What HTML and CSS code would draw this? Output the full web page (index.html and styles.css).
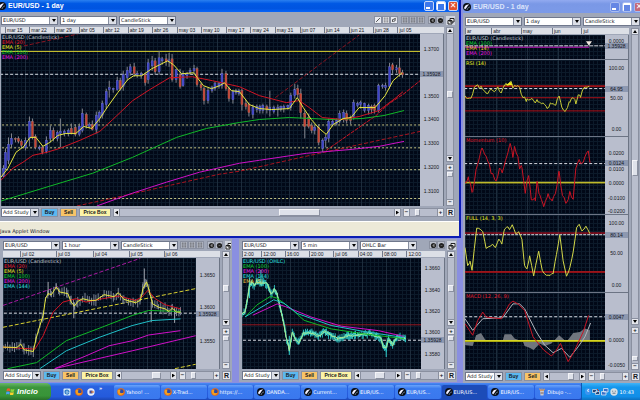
FILE: index.html
```
<!DOCTYPE html>
<html lang="en">
<head>
<meta charset="utf-8">
<title>EUR/USD - 1 day</title>
<link rel="stylesheet" href="styles.css">
</head>
<body>
<svg class="defs" aria-hidden="true">
  <symbol id="i-pen" viewBox="0 0 8 8"><path d="M1.5 6.5 6.5 1.5" stroke="#222" stroke-width="1"/></symbol>
  <symbol id="i-lines" viewBox="0 0 8 8"><path d="M1 1.5H7M1 4H7M1 6.5H7" stroke="#333" stroke-width="1" stroke-dasharray="1.6 .6"/></symbol>
  <symbol id="i-clip" viewBox="0 0 8 8"><path d="M2 6.5V3.5L5 2.5 6.5 1M3 6 5.5 5V2" stroke="#222" fill="none"/></symbol>
  <symbol id="i-left" viewBox="0 0 8 8"><circle cx="4" cy="4" r="3" fill="#222"/><path d="M4.5 2.2V5.8M3 4H4" stroke="#bbb" stroke-width=".9"/></symbol>
  <symbol id="i-dot" viewBox="0 0 8 8"><circle cx="4" cy="4" r="3" fill="#222"/><path d="M3 4H5" stroke="#777" stroke-width=".8"/></symbol>
  <symbol id="i-pop" viewBox="0 0 8 8"><path d="M3 1.5H7V5H3ZM1 3.5H5V7H1Z" fill="#eee" stroke="#111" stroke-width=".9"/></symbol>
  <symbol id="i-ball" viewBox="0 0 8 8"><circle cx="4" cy="4" r="4" fill="#080c14"/><path d="M1 5C2 2 4 1 6.5 1.5 4 3 4.5 4 2 6.5Z" fill="#eef"/><path d="M4 7C4.500 5 6 4 7 4" stroke="#9ab" fill="none" stroke-width=".7"/></symbol>
  <symbol id="i-fox" viewBox="0 0 8 8"><circle cx="4" cy="4" r="3.800" fill="#e86a10"/><circle cx="4.400" cy="3.400" r="2.200" fill="#2a4aa8"/><path d="M.5 3C1.500 1 2.500 2 3.500 2.500L2.800 4C3.500 5.500 5.500 5.500 6.500 4.500 6 7 3 7.600 1.500 6Z" fill="#f4a020"/></symbol>
  <symbol id="i-ie" viewBox="0 0 8 8"><rect x=".5" y=".5" width="7" height="7" rx="1" fill="#d8ecfa"/><path d="M2 4H6C6 1.500 2 1.500 2 4S5 6.500 6 5.200" fill="none" stroke="#2a78c8" stroke-width="1.100"/></symbol>
  <symbol id="i-media" viewBox="0 0 8 8"><circle cx="4" cy="4" r="3.700" fill="#e8ecf8"/><path d="M2.500 2.500H5.500V5.500H2.500Z" fill="#3a4aa0"/><path d="M4 4H7" stroke="#e86a10"/></symbol>
  <symbol id="i-paint" viewBox="0 0 8 8"><path d="M2 3H6L5.500 7.500H2.500Z" fill="#c8c8d0"/><path d="M3 3 1.500.5M4 3V.5M5 3 6.500.8" stroke="#e8a050" stroke-width="1.100"/><path d="M2.500 5H5.600" stroke="#806050"/></symbol>
  <symbol id="i-flag" viewBox="0 0 10 10"><path d="M1 2Q3 .8 4.800 2L4.300 4.800Q2.500 3.800.5 4.800Z" fill="#f05a28"/><path d="M5.400 2.200Q7.200 3.200 9.400 2.200L8.800 5Q7 6 4.900 5Z" fill="#8cd43c"/><path d="M.4 5.400Q2.400 4.400 4.200 5.500L3.700 8.300Q1.800 7.300-.1 8.300Z" fill="#4aa0f4"/><path d="M4.800 5.700Q6.700 6.700 8.700 5.700L8.100 8.500Q6.200 9.500 4.300 8.500Z" fill="#fcd22c"/></symbol>
  <symbol id="i-net" viewBox="0 0 8 8"><path d="M.5 1.500H4.500V4.500H.5ZM3.500 3.500H7.500V6.500H3.500Z" fill="#284878" stroke="#c8d8e8" stroke-width=".8"/><path d="M5 1 7 3" stroke="#d03030"/></symbol>
  <symbol id="i-pcs" viewBox="0 0 8 8"><path d="M2.500.5H7V4H2.500ZM.5 3.500H5V7H.5Z" fill="#3a70c8" stroke="#dde8f4" stroke-width=".8"/></symbol>
  <symbol id="i-face" viewBox="0 0 8 8"><circle cx="4" cy="4" r="3.700" fill="#d8e0e4"/><path d="M2.200 3.200H3.200M4.800 3.200H5.800M2.500 5.200H5.500" stroke="#405870" stroke-width=".8"/></symbol>
</svg>

<main class="desktop">
  <div class="left">
    <section class="window main-window" aria-label="EUR/USD 1 day">
      <header class="titlebar"><svg class="ico"><use href="#i-ball"/></svg><h1>EUR/USD - 1 day</h1>
        <button class="cap min" aria-label="Minimize"></button><button class="cap max" aria-label="Maximize"></button><button class="cap close" aria-label="Close">✕</button></header>
      <div class="client">
        <div class="toolbar">
          <span class="pick"><select aria-label="Pair"><option>EUR/USD</option></select></span>
          <span class="pick"><select aria-label="Interval"><option>1 day</option></select></span>
          <span class="pick"><select aria-label="Chart type"><option>CandleStick</option></select></span>
          <span class="tools">
            <span class="group lit"><button aria-label="Draw"><svg><use href="#i-pen"/></svg></button><button aria-label="Levels"><svg><use href="#i-lines"/></svg></button><button aria-label="Attach"><svg><use href="#i-clip"/></svg></button></span>
            <span class="group"><button aria-label="Grid"><svg><use href="#i-lines"/></svg></button><button aria-label="Rows"><svg><use href="#i-lines"/></svg></button><button aria-label="Dashes"><svg><use href="#i-lines"/></svg></button></span>
            <span class="group"><button aria-label="Back"><svg><use href="#i-left"/></svg></button><button aria-label="Forward"><svg><use href="#i-dot"/></svg></button></span>
          </span>
          <button class="pop" aria-label="Detach"><svg><use href="#i-pop"/></svg></button>
        </div>
        <div class="work">
          <div class="charts">
            <div class="dates" data-chart="day"></div>
            <div class="panel"><div class="plot week-grid" id="day"><ul class="legend"><li>EUR/USD (Candlestick)</li><li class="red">EMA (20)</li><li class="yellow">EMA (5)</li><li class="green">EMA (100)</li><li class="magenta">EMA (200)</li></ul></div><div class="axis"></div></div>
          </div>
          <div class="vbar"><button class="up" aria-label="Scroll up"></button><span class="track"><i class="t-35"></i></span><button class="down" aria-label="Scroll down"></button><button class="sep" aria-label="Zoom in">+</button><span class="track zoom"><i class="t-5"></i></span><button aria-label="Zoom out">−</button></div>
        </div>
        <div class="bottombar">
          <span class="pick study"><select aria-label="Study"><option>Add Study</option></select></span>
          <button class="act buy">Buy</button><button class="act sell">Sell</button><button class="act box">Price Box</button>
          <span class="hbar"><button class="prev" aria-label="Scroll left"></button><span class="track"><i class="h-main"></i></span><button class="next" aria-label="Scroll right"></button></span>
          <span class="hbar zoomer"><button aria-label="Narrower">−</button><span class="track"><i class="h-zoom"></i></span><button aria-label="Wider">+</button></span>
          <button class="reset">R</button>
        </div>
      </div>
      <footer class="status">Java Applet Window</footer>
    </section>

    <div class="lower">
      <section class="window sub" aria-label="EUR/USD 1 hour">
        <div class="client">
          <div class="toolbar">
            <span class="pick"><select aria-label="Pair"><option>EUR/USD</option></select></span>
            <span class="pick"><select aria-label="Interval"><option>1 hour</option></select></span>
            <span class="pick"><select aria-label="Chart type"><option>CandleStick</option></select></span>
            <span class="tools">
              <span class="group"><button aria-label="Grid"><svg><use href="#i-lines"/></svg></button><button aria-label="Rows"><svg><use href="#i-lines"/></svg></button><button aria-label="Dashes"><svg><use href="#i-lines"/></svg></button></span>
              <span class="group"><button aria-label="Back"><svg><use href="#i-left"/></svg></button><button aria-label="Forward"><svg><use href="#i-dot"/></svg></button></span>
            </span>
            <button class="pop" aria-label="Detach"><svg><use href="#i-pop"/></svg></button>
          </div>
          <div class="work">
            <div class="charts">
              <div class="dates" data-chart="hour"></div>
              <div class="panel"><div class="plot hour-grid" id="hour"><ul class="legend"><li>EUR/USD (Candlestick)</li><li class="red">EMA (20)</li><li class="yellow">EMA (5)</li><li class="green">EMA (100)</li><li class="magenta">EMA (200)</li><li class="cyan">EMA (144)</li></ul></div><div class="axis"></div></div>
            </div>
            <div class="vbar"><button class="up" aria-label="Scroll up"></button><span class="track"><i class="t-50"></i></span><button class="down" aria-label="Scroll down"></button><button class="sep" aria-label="Zoom in">+</button><span class="track zoom"><i class="t-5"></i></span><button aria-label="Zoom out">−</button></div>
          </div>
          <div class="bottombar">
            <span class="pick study"><select aria-label="Study"><option>Add Study</option></select></span>
            <button class="act buy">Buy</button><button class="act sell">Sell</button><button class="act box">Price Box</button>
            <span class="hbar"><button class="prev" aria-label="Scroll left"></button><span class="track"><i class="h-sub"></i></span><button class="next" aria-label="Scroll right"></button></span>
            <span class="hbar zoomer"><button aria-label="Narrower">−</button><span class="track"><i class="h-zoom"></i></span><button aria-label="Wider">+</button></span>
            <button class="reset">R</button>
          </div>
        </div>
      </section>
      <section class="window sub" aria-label="EUR/USD 5 min">
        <div class="client">
          <div class="toolbar">
            <span class="pick"><select aria-label="Pair"><option>EUR/USD</option></select></span>
            <span class="pick"><select aria-label="Interval"><option>5 min</option></select></span>
            <span class="pick"><select aria-label="Chart type"><option>OHLC Bar</option></select></span>
            <span class="tools"><span class="group"><button aria-label="Back"><svg><use href="#i-left"/></svg></button><button aria-label="Forward"><svg><use href="#i-dot"/></svg></button></span></span>
            <button class="pop" aria-label="Detach"><svg><use href="#i-pop"/></svg></button>
          </div>
          <div class="work">
            <div class="charts">
              <div class="dates" data-chart="five"></div>
              <div class="panel"><div class="plot five-grid" id="five"><ul class="legend"><li class="cyan">EUR/USD (OHLC)</li><li class="green">EMA (100)</li><li class="magenta">EMA (200)</li><li class="cyan">EMA (144)</li><li class="gold">EMA (5)</li></ul></div><div class="axis"></div></div>
            </div>
            <div class="vbar"><button class="up" aria-label="Scroll up"></button><span class="track"><i class="t-50"></i></span><button class="down" aria-label="Scroll down"></button><button class="sep" aria-label="Zoom in">+</button><span class="track zoom"><i class="t-5"></i></span><button aria-label="Zoom out">−</button></div>
          </div>
          <div class="bottombar">
            <span class="pick study"><select aria-label="Study"><option>Add Study</option></select></span>
            <button class="act buy">Buy</button><button class="act sell">Sell</button><button class="act box">Price Box</button>
            <span class="hbar"><button class="prev" aria-label="Scroll left"></button><span class="track"><i class="h-five"></i></span><button class="next" aria-label="Scroll right"></button></span>
            <span class="hbar zoomer"><button aria-label="Narrower">−</button><span class="track"><i class="h-zoom"></i></span><button aria-label="Wider">+</button></span>
            <button class="reset">R</button>
          </div>
        </div>
      </section>
    </div>
  </div>

  <section class="window side" aria-label="EUR/USD 1 day studies">
    <header class="titlebar idle"><svg class="ico"><use href="#i-ball"/></svg><h1>EUR/USD - 1 day</h1>
      <button class="cap min" aria-label="Minimize"></button><button class="cap max" aria-label="Maximize"></button><button class="cap close" aria-label="Close">✕</button></header>
    <div class="client">
      <div class="toolbar">
        <span class="pick"><select aria-label="Pair"><option>EUR/USD</option></select></span>
        <span class="pick"><select aria-label="Interval"><option>1 day</option></select></span>
        <span class="pick"><select aria-label="Chart type"><option>CandleStick</option></select></span>
      </div>
      <div class="work">
        <div class="charts">
          <div class="dates" data-chart="price"></div>
          <div class="panel short"><div class="plot" id="price"><ul class="legend"><li>EUR/USD (Candlestick)</li><li class="green">EMA (100)</li><li class="gold">EMA (14)</li><li class="magenta">EMA (200)</li></ul></div><div class="axis"></div></div>
          <div class="panel"><div class="plot" id="rsi"><ul class="legend"><li class="yellow">RSI (14)</li></ul></div><div class="axis"></div></div>
          <div class="panel"><div class="plot" id="momentum"><ul class="legend"><li class="red">Momentum (10)</li></ul></div><div class="axis"></div></div>
          <div class="panel"><div class="plot" id="full"><ul class="legend"><li class="yellow">FULL (14, 3, 3)</li></ul></div><div class="axis"></div></div>
          <div class="panel"><div class="plot" id="macd"><ul class="legend"><li class="red">MACD (12, 26, 9)</li></ul></div><div class="axis"></div></div>
        </div>
        <div class="vbar"><button class="up" aria-label="Scroll up"></button><span class="track"><i class="t-50"></i></span><button class="down" aria-label="Scroll down"></button><button class="sep" aria-label="Zoom in">+</button><span class="track zoom"><i class="t-90"></i></span><button aria-label="Zoom out">−</button></div>
      </div>
      <div class="bottombar">
        <span class="pick study"><select aria-label="Study"><option>Add Study</option></select></span>
        <button class="act buy">Buy</button><button class="act sell">Sell</button>
        <span class="hbar"><button class="prev" aria-label="Scroll left"></button><span class="track"><i class="h-sub"></i></span><button class="next" aria-label="Scroll right"></button></span>
        <span class="hbar zoomer"><button aria-label="Narrower">−</button><span class="track"><i class="h-zoom"></i></span><button aria-label="Wider">+</button></span>
        <button class="reset">R</button>
      </div>
    </div>
  </section>
</main>

<nav class="taskbar" aria-label="Taskbar">
  <button class="start"><svg><use href="#i-flag"/></svg>Inicio</button>
  <span class="quick"><svg><use href="#i-ie"/></svg><svg><use href="#i-fox"/></svg><svg><use href="#i-media"/></svg><b>»</b></span>
  <div class="tasks">
    <button><svg><use href="#i-fox"/></svg>Yahoo! ...</button>
    <button><svg><use href="#i-fox"/></svg>X-Trad...</button>
    <button><svg><use href="#i-fox"/></svg>https://...</button>
    <button><svg><use href="#i-ball"/></svg>OANDA...</button>
    <button><svg><use href="#i-ball"/></svg>Current...</button>
    <button><svg><use href="#i-ball"/></svg>EUR/US...</button>
    <button><svg><use href="#i-ball"/></svg>EUR/US...</button>
    <button class="on"><svg><use href="#i-ball"/></svg>EUR/US...</button>
    <button><svg><use href="#i-ball"/></svg>EUR/US...</button>
    <button><svg><use href="#i-paint"/></svg>Dibujo -...</button>
  </div>
  <span class="tray"><b>‹</b><svg><use href="#i-net"/></svg><svg><use href="#i-pcs"/></svg><svg><use href="#i-face"/></svg><time>10:43</time></span>
</nav>
<script src="charts.js"></script>
</body>
</html>
```
FILE: styles.css
```
* { box-sizing: border-box; }
html, body { height: 100%; margin: 0; }
body {
  display: grid;
  grid-template-rows: minmax(0, 1fr) 17px;
  background: #8890dc;
  font: 5px/6px "DejaVu Sans", "Liberation Sans", sans-serif;
  color: #14161c;
  overflow: hidden;
}
button, select { font: inherit; color: inherit; margin: 0; padding: 0; border: 0; border-radius: 0; }
button { display: grid; place-items: center; overflow: hidden; }
.defs { position: absolute; width: 0; height: 0; }
svg { display: block; }
ul { list-style: none; margin: 0; padding: 0; }

.desktop { display: grid; grid-template-columns: 461fr 179fr; min-height: 0; }
.left { display: grid; grid-template-rows: 238fr 145fr; min-width: 0; min-height: 0; }
.lower { display: grid; grid-template-columns: 234fr 227fr; min-height: 0; }
.window { display: flex; flex-direction: column; min-width: 0; min-height: 0; }
.main-window { border: solid #0a1cb4; border-width: 0 2px 2px 0; }
.side { border-left: 2px solid #8a90e0; overflow: hidden; }
.sub { border: 1px solid #8a8fe0; border-width: 1px 2px 1px 0; }
.sub + .sub { border-left-width: 5px; border-right-width: 4px; }

.titlebar {
  display: flex;
  align-items: center;
  gap: 2px;
  height: 12px;
  padding-right: 1px;
  background: linear-gradient(#2a80f0, #0058e4 30%, #0054e0 70%, #0a66f8);
  color: #fff;
}
.titlebar h1 { flex: 1; margin: 0; font: bold 7px/10px "Liberation Sans", sans-serif; white-space: nowrap; }
.idle { background: linear-gradient(#92aaf0, #7a98e6 30%, #7c9ae8); color: #dce4fa; }
.side .titlebar { height: 13px; padding-right: 0; margin-right: -4px; }
.ico { width: 8px; height: 8px; margin-left: -2px; }
.side .ico { margin-left: 0; }
.cap { width: 10px; height: 10px; border: 1px solid #c8d8f8; border-radius: 2px; background: #3c78ec; color: #fff; font: bold 8px/8px "DejaVu Sans", sans-serif; }
.cap.min::before { content: ""; width: 4px; height: 2px; background: #fff; align-self: end; margin: 0 2px 1px 0; }
.cap.max::before { content: ""; width: 6px; height: 6px; border: 1px solid #fff; border-top-width: 2px; }
.cap.close { background: #e0502c; }
.idle .cap { background: #6486e4; border-color: #a8bcf0; }
.idle .cap.close { background: #c46878; }

.client { flex: 1; display: flex; flex-direction: column; min-height: 0; background: #a0a7b8; padding: 4px 3px 4px 1px; }
.main-window .client { padding-right: 4px; }
.sub .client { padding: 2px 1px 2px 3px; }
.side .client { padding: 4px 0 2px 2px; }
.toolbar { display: flex; height: 9px; margin-bottom: 2px; gap: 2px; }
.sub .toolbar { margin-bottom: 1px; }
.pick { position: relative; flex: 0 0 57px; height: 9px; background: #fff; border: 1px solid #70788c; }
.pick select { display: block; width: 100%; height: 7px; padding-left: 1px; line-height: 7px; background: #fff; appearance: none; }
.pick::before { content: ""; position: absolute; right: 0; top: 0; width: 7px; height: 7px; background: #dde0e8; border-left: 1px solid #888fa0; pointer-events: none; }
.pick::after { content: ""; position: absolute; right: 1px; top: 2px; width: 4px; height: 3px; background: #000; clip-path: polygon(0 0, 100% 0, 50% 100%); pointer-events: none; }
.tools { flex: 1; display: flex; justify-content: flex-end; gap: 3px; }
.group { display: flex; }
.group button { width: 8px; height: 8px; border: 1px solid #8a90a0; background: #b8bdca; }
.group.lit button { background: #e8eaf0; }
.group svg, .pop svg { width: 6px; height: 6px; }
.group:last-child svg { width: 7px; height: 7px; }
.pop { width: 9px; height: 9px; background: #d0d4de; }
.pop svg { width: 8px; height: 8px; }

.work { flex: 1; display: flex; gap: 2px; min-height: 0; }
.charts { flex: 1; display: flex; flex-direction: column; min-width: 0; }
.dates { position: relative; height: 6px; background: #dcdfe6; overflow: hidden; margin-bottom: 1px; font: 5px/6px "Liberation Sans", sans-serif; }
.dates span { position: absolute; top: 0; padding-left: 1px; border-left: 1px solid #70788c; white-space: nowrap; }
.panel { flex: 78 1 0; display: flex; min-height: 0; }
.panel + .panel { border-top: 1px solid #6c7484; }
.panel.short { flex-grow: 24; }
.plot {
  position: relative;
  flex: 1;
  min-width: 0;
  overflow: hidden;
  --major: 31px;
  background:
    repeating-linear-gradient(90deg, #1d2c3c 0 1px, transparent 1px var(--major)),
    repeating-linear-gradient(#0c1a2a 0 1px, transparent 1px 4px),
    repeating-linear-gradient(90deg, #0c1a2a 0 1px, transparent 1px 4px),
    #010817;
}
.week-grid { --major: 24px; }
.hour-grid { --major: 36px; }
.five-grid { --major: 24px; }
.plot svg { position: absolute; inset: 0; width: 100%; height: 100%; }
.plot path { fill: none; vector-effect: non-scaling-stroke; stroke-width: 1px; }
.plot path.solid { stroke: none; }
.legend { position: relative; padding: 1px 0 0 1px; color: #c0c8d0; line-height: 5px; white-space: nowrap; }
.red { color: #e01828; }
.yellow { color: #f0f020; }
.green { color: #10d830; }
.magenta { color: #e818e0; }
.cyan { color: #30e0e0; }
.gold { color: #f0c840; }
.axis { position: relative; flex: 0 0 24px; background: #b9becd; border-right: 1px solid #6c7484; font: 5px/6px "Liberation Sans", sans-serif; text-align: center; overflow: hidden; }
.axis span { position: absolute; left: 0; right: 0; margin-top: -3px; }
.axis .now { background: #8d98b0; z-index: 1; }

.vbar { flex: 0 0 9px; display: flex; flex-direction: column; }
.vbar button, .hbar button, .reset { background: #e4e6ec; border: 1px solid #8a90a0; width: 8px; height: 7px; font: bold 6px/5px "Liberation Sans", sans-serif; }
.vbar .sep { margin-top: 2px; }
.track { position: relative; flex: 1; width: 8px; background: #b9becd; border: 1px solid #8a90a0; border-width: 0 1px; }
.vbar .zoom { flex: 0 0 28px; }
.side .vbar .track { flex: 1; }
.side .vbar .track.zoom { flex: 0 0 29px; }
.sub .vbar .zoom { flex: 0 0 27px; }
.track i { position: absolute; background: #dfe2ea; border: 1px solid #f4f4f8; border-right-color: #8a90a0; border-bottom-color: #8a90a0; }
.vbar .track i { left: 0; right: 0; height: 7px; }
.vbar .zoom i { height: 5px; }
.vbar .track .t-35 { top: 47%; }
.vbar .track .t-50 { top: 45%; }
.side .track .t-50 { top: 44%; height: 16px; }
.vbar .track .t-5 { top: 5%; }
.vbar .track .t-90 { top: 76%; }
.up::before, .down::before, .prev::before, .next::before { content: ""; width: 4px; height: 3px; background: #000; }
.up::before { clip-path: polygon(50% 0, 100% 100%, 0 100%); }
.down::before { clip-path: polygon(0 0, 100% 0, 50% 100%); }
.prev::before, .next::before { width: 3px; height: 4px; }
.prev::before { clip-path: polygon(100% 0, 100% 100%, 0 50%); }
.next::before { clip-path: polygon(0 0, 100% 50%, 0 100%); }

.bottombar { display: flex; gap: 2px; height: 9px; margin-top: 2px; }
.pick.study { flex-basis: 38px; }
.act { height: 9px; border: 1px solid #8a90a0; font-weight: bold; font-family: "Liberation Sans", sans-serif; line-height: 7px; }
.buy { flex: 0 0 17px; background: #5cb8f0; }
.sell { flex: 0 0 17px; background: #f8c468; }
.box { flex: 0 0 32px; background: #fcf4a8; }
.hbar { flex: 1; display: flex; min-width: 0; }
.hbar button { height: 9px; width: 7px; flex: none; }
.hbar .track { width: auto; height: 9px; border-width: 1px 0; min-width: 0; }
.zoomer { flex: 0 0 41px; }
.track .h-main { left: 58%; width: 15%; top: 0; bottom: 0; }
.track .h-sub { left: 62%; width: 20%; top: 0; bottom: 0; }
.track .h-five { left: 40%; width: 30%; top: 0; bottom: 0; }
.track .h-zoom { left: 20%; width: 18%; top: 0; bottom: 0; }
.bottombar .reset { height: 9px; width: 9px; flex: none; font-size: 7px; }
.status { height: 15px; border-top: 1px solid #fff; padding-top: 6px; background: #ece9d8; line-height: 7px; overflow: hidden; }

.taskbar { display: flex; background: linear-gradient(#4a8cf4, #2a62e0 20%, #245adc 80%, #1c46b4); color: #fff; white-space: nowrap; }
.taskbar svg { flex: none; width: 8px; height: 8px; }
.start { display: flex; align-items: center; gap: 2px; width: 51px; padding-left: 6px; border-radius: 0 5px 5px 0; background: linear-gradient(#6ab86a, #3c963c 25%, #389438 75%, #287028); font: italic bold 8px/12px "Liberation Sans", sans-serif; }
.start svg { width: 9px; height: 9px; }
.quick { display: flex; align-items: center; gap: 4px; width: 63px; padding-left: 12px; }
.quick b { font-size: 5px; align-self: start; line-height: 10px; }
.tasks { flex: 1; display: grid; grid-template-columns: repeat(10, minmax(0, 1fr)); gap: 1px; align-items: center; }
.tasks button { display: flex; align-items: center; gap: 1px; height: 14px; padding-left: 3px; border-radius: 2px; background: linear-gradient(#6aa4fa, #3c7cf0 25%, #3a78ee); }
.tasks .on { background: #1c4cb8; }
.tray { display: flex; align-items: center; gap: 1px; width: 59px; padding: 0 6px 0 3px; background: linear-gradient(#40b4f8, #1496ec 25%, #128ee8 80%, #0c70c0); border-left: 1px solid #0c58b0; }
.tray b { width: 6px; height: 7px; border-radius: 3px; background: #3c94f0; font: bold 7px/6px "Liberation Sans", sans-serif; text-align: center; }
.tray time { margin-left: auto; }
```
FILE: charts.js
```
// Each chart: view box, price labels, date marks and the layers drawn in order.
const C = { red: '#d01424', yellow: '#e8e840', green: '#10b828', magenta: '#d010c8', cyan: '#20c0c8', white: '#d8dce4', cream: '#c8c888' };
const h = (y, c, dash) => ({ pts: [[-50, y], [700, y]], c, dash });

const seeded = seed => () => (seed = (seed * 16807) % 2147483647) / 2147483647;
const path = p => 'M' + p.map(q => q.join(' ')).join('L');

// Inserts jittered points between the key points of a series.
function rough(pts, step, amp, seed) {
  const r = seeded(seed), out = [];
  for (let i = 0; i < pts.length - 1; i++) {
    const [x0, y0] = pts[i], [x1, y1] = pts[i + 1];
    for (let x = x0; x < x1; x += step) out.push([+x.toFixed(1), +(y0 + (y1 - y0) * (x - x0) / (x1 - x0) + (r() - .5) * amp).toFixed(1)]);
  }
  return out.concat([pts[pts.length - 1]]);
}
function bars(pts, step, amp, seed) {
  const r = seeded(seed);
  return rough(pts, step, 4, seed + 1).map(([x, y]) => `M${x} ${y - amp * (.3 + r())}V${y + amp * (.3 + r())}`).join('');
}

// x, high, body top, body bottom, low, direction
const candles = `3 165 168 176 177 b|5 148 152 168 170 b|8 137 144 160 164 b|11 133 138 144 147 b|15 137 138 139 142 r|18 136 138 141 143 r|21 139 141 145 148 r|25 137 140 147 150 b|29 116 121 138 146 b|32 118 121 137 139 r|35 134 136 147 149 r|39 145 147 148 150 b|42 145 147 152 154 r|46 136 140 151 153 b|50 125 130 138 142 b|53 127 130 138 141 r|57 130 132 138 141 b|60 118 131 133 147 b|64 129 131 133 136 b|68 128 130 133 136 b|71 123 128 133 134 r|75 124 127 134 136 r|79 123 126 134 136 b|82 108 113 130 132 b|86 112 114 125 128 r|89 122 124 126 128 b|92 120 124 129 130 r|96 111 115 129 133 b|99 110 112 118 122 b|102 100 103 115 118 b|106 88 91 104 108 b|109 80 87 89 97 b|113 87 88 89 92 b|117 76 80 89 90 b|120 77 80 88 90 r|123 70 74 86 90 b|127 66 70 77 80 b|130 63 66 72 75 b|134 62 66 73 76 r|137 70 73 74 77 b|141 71 73 74 78 b|145 72 74 82 85 r|148 58 62 79 83 b|152 55 60 65 70 b|155 57 60 71 74 r|159 50 57 71 74 b|162 56 58 60 64 b|166 53 58 61 65 r|169 52 59 61 66 b|172 53 58 79 81 r|176 68 69 79 82 b|180 68 74 86 88 r|183 70 73 85 86 b|187 71 73 75 78 b|190 67 70 72 74 b|194 64 68 70 73 b|197 66 68 84 86 r|201 82 84 87 90 r|204 86 88 100 104 r|208 87 90 100 103 b|212 85 87 90 92 b|215 81 83 88 90 b|219 81 83 86 88 b|222 68 73 85 88 b|226 70 73 88 90 r|229 86 88 98 101 r|233 89 91 99 103 b|236 88 90 92 94 b|239 88 90 93 95 b|242 88 90 104 110 r|246 99 103 106 109 r|249 102 104 112 116 r|253 104 107 114 118 b|257 104 106 109 112 b|260 104 106 110 113 b|263 103 105 110 113 b|267 104 106 109 113 r|270 90 107 110 116 b|274 105 107 111 113 b|278 104 107 109 116 b|281 105 106 109 111 b|284 104 106 108 112 b|288 104 105 107 109 b|291 92 95 107 110 b|295 83 89 95 98 b|298 84 88 94 97 r|301 88 93 112 118 r|305 110 113 126 138 r|309 113 117 126 128 r|312 122 125 130 133 r|315 125 127 130 134 b|319 124 127 142 145 r|323 138 140 148 152 b|326 134 137 140 147 b|329 118 121 138 142 b|333 118 121 124 126 b|337 118 120 123 125 b|340 110 113 121 123 b|344 109 112 118 122 b|347 110 113 120 123 r|351 115 117 120 124 r|354 99 102 116 119 b|358 101 103 105 107 b|361 100 102 104 108 b|365 102 103 110 112 b|369 103 105 110 114 b|372 104 106 109 113 r|375 103 105 110 113 r|379 83 85 110 112 b|383 83 85 86 88 b|386 82 85 87 90 b|390 62 66 86 88 b|393 62 64 69 73 r|397 64 67 69 72 b|400 57 67 73 76 r|403 69 72 74 77 r`.split('|').map(c => c.split(' '));

const closes = [[1, 177], [8, 168], [16, 152], [24, 146], [30, 137], [36, 137], [43, 146], [50, 142], [58, 135], [66, 133], [76, 133], [84, 126], [92, 128], [100, 118], [108, 106], [118, 92], [128, 79], [134, 75], [142, 75], [152, 68], [160, 64], [168, 60], [174, 64], [182, 73], [194, 72], [204, 85], [212, 88], [220, 85], [225, 82], [232, 90], [240, 91], [250, 104], [260, 108], [272, 109], [290, 108], [298, 97], [304, 107], [312, 119], [320, 128], [327, 134], [334, 124], [344, 118], [352, 117], [360, 107], [376, 107], [386, 95], [394, 80], [403, 72]];
const hourClose = [[8, 334], [50, 335], [62, 325], [72, 342], [100, 347], [108, 310], [120, 270], [130, 240], [137, 190], [145, 175], [155, 178], [170, 155], [180, 170], [205, 175], [215, 200], [225, 212], [235, 198], [250, 190], [270, 195], [290, 195], [315, 178], [345, 184], [358, 172], [375, 192], [410, 202], [425, 195], [433, 160], [444, 140], [453, 170], [462, 205], [480, 215], [500, 220], [512, 228], [522, 218], [535, 230], [547, 230]];
const fiveClose = [[36, 240], [45, 230], [52, 195], [58, 150], [65, 145], [72, 155], [80, 142], [90, 148], [100, 145], [112, 152], [122, 178], [132, 165], [140, 178], [150, 220], [160, 265], [168, 310], [176, 340], [185, 290], [195, 310], [205, 318], [218, 292], [240, 290], [262, 300], [280, 287], [300, 300], [320, 310], [345, 300], [380, 298], [415, 292], [435, 300], [448, 310], [455, 332], [463, 335], [470, 308], [482, 328], [495, 303], [520, 308]];

const charts = {
  day: {
    box: [1, 33, 420, 173],
    dates: ['mar 15', 'mar 22', 'mar 29', 'abr 05', 'abr 12', 'abr 19', 'abr 26', 'may 03', 'may 10', 'may 17', 'may 24', 'may 31', 'jun 07', 'jun 14', 'jun 21', 'jun 28', 'jul 05'].map((t, i) => [(4 + i * 24.6) / 4.44, t]),
    labels: [[48, '1.3700'], [73, '1.35928', 1], [95.5, '1.3500'], [119, '1.3400'], [143, '1.3300'], [167, '1.3200'], [191, '1.3100']],
    layers: [
      h(50.5, '#d8d030'), h(73.5, C.white, '3 2'), h(124.5, C.cream, '2 2'), h(147.5, C.cream, '2 2'), h(169.5, C.cream, '2 2'), h(198.5, C.cream, '2 2'),
      { pts: [[24, 45], [78, 33]], c: '#8c1420', dash: '4 2' }, { pts: [[276, 97], [360, 34]], c: '#8c1420', dash: '4 2' },
      { pts: [[77, 206], [127, 195], [220, 174], [240, 171], [320, 153], [421, 131]], c: '#a81420', dash: '4 2' },
      { pts: [[327, 150], [377, 115], [390, 103], [405, 93], [421, 80]], c: C.red, dash: '4 1' },
      { candles },
      { pts: [[1, 201], [50, 186], [93, 173], [133, 157], [177, 137], [207, 128], [240, 122], [260, 119], [290, 117], [333, 119], [363, 118], [385, 115], [405, 110]], c: C.green },
      { pts: [[97, 206], [133, 193], [167, 182], [200, 172], [240, 163], [260, 160], [307, 153], [353, 149], [380, 146], [405, 141]], c: C.magenta },
      { pts: [[1, 180], [13, 168], [23, 162], [33, 155], [47, 152], [60, 148], [80, 140], [100, 131], [113, 119], [133, 100], [150, 89], [170, 77], [193, 76], [213, 80], [240, 86], [260, 95], [287, 102], [300, 100], [310, 107], [323, 117], [343, 119], [360, 116], [380, 110], [397, 97], [404, 91]], c: C.red },
      { pts: closes, c: C.yellow }
    ]
  },
  hour: {
    box: [8, 69, 586, 330],
    dates: [[8, 'jul 02'], [24.5, 'jul 03'], [41.5, 'jul 04'], [58, 'jul 05'], [74, 'jul 06']],
    labels: [[120, '1.3650'], [216, '1.3600'], [234, '1.35928', 1], [315, '1.3550']],
    layers: [
      h(233, C.white, '3 2'),
      { pts: [[8, 210], [425, 70]], c: '#a818a0', dash: '4 2' }, { pts: [[8, 275], [593, 160]], c: '#d8d030', dash: '4 2' }, { pts: [[530, 398], [593, 385]], c: '#d8d030', dash: '4 2' },
      { d: bars(hourClose, 7, 14, 7), c: '#7c8494' },
      { d: 'M437 100V160M458 200V260M223 200V248M145 140V180M529 220V262', c: '#a0a4ac' },
      { pts: [[22, 398], [110, 380], [200, 315], [300, 278], [400, 240], [450, 225], [547, 228]], c: C.green },
      { pts: [[120, 398], [200, 345], [300, 305], [400, 270], [460, 255], [547, 250]], c: C.cyan },
      { pts: [[165, 398], [260, 360], [330, 330], [400, 315], [450, 298], [547, 285]], c: C.magenta },
      { pts: [[165, 398], [400, 345], [593, 300]], c: C.magenta },
      { pts: [[8, 334], [105, 340], [130, 300], [160, 230], [190, 200], [230, 190], [260, 200], [310, 190], [360, 182], [410, 195], [430, 185], [448, 165], [470, 190], [500, 208], [547, 220]], c: C.red },
      { pts: hourClose, c: C.yellow }
    ]
  },
  five: {
    box: [36, 73, 530, 324],
    dates: [[0, '2:00'], [9.5, '12:00'], [21, '16:00'], [33, '20:00'], [45, 'jul 06'], [57, '04:00'], [69, '08:00'], [81, '12:00']],
    labels: [[102, '1.3660'], [165, '1.3640'], [228, '1.3620'], [290, '1.3600'], [312, '1.35928', 1], [353, '1.3580']],
    layers: [
      h(268, '#981820'), h(313, C.white, '3 2'),
      { d: bars(fiveClose, 3, 10, 11), c: '#28b8b8' },
      { d: 'M92 108V150M58 130V190M176 300V356M463 320V362', c: '#30d0d0' },
      { pts: rough(fiveClose, 3, 14, 5), c: '#60e8c8' }, { pts: rough(fiveClose, 6, 8, 9), c: '#a8e890' },
      { pts: [[45, 245], [80, 210], [120, 185], [140, 190], [180, 220], [220, 255], [300, 280], [400, 295], [515, 308]], c: C.green },
      { pts: [[68, 240], [140, 207], [165, 215], [240, 245], [330, 272], [440, 285], [515, 302]], c: C.magenta },
      { pts: [[45, 245], [130, 195], [160, 205], [200, 235], [300, 270], [400, 288], [515, 305]], c: C.cyan }
    ]
  },
  price: {
    box: [27, 103, 418, 72],
    dates: [[0, 'ar'], [16, 'abr'], [34, 'may'], [53, 'jun'], [71, 'jul']],
    labels: [[120, '0.0000'], [138, '1.35928', 1]],
    layers: [{ pts: [[27, 140], [398, 140]], c: C.magenta }, h(136, C.white, '4 1'), { fill: 'M388 122H406L397 136Z', c: '#f4e8e0' }]
  },
  rsi: {
    box: [27, 175, 418, 234],
    labels: [[199, '100.00'], [264, '64.95', 1], [292, '50.00'], [385, '0.00']],
    layers: [
      h(254, '#d81818'), h(256, '#a01018'), h(290, '#b01018'), h(330, '#b01018'), h(262, C.white, '3 2'),
      { pts: rough([[27, 290], [35, 295], [45, 290], [55, 262], [65, 256], [78, 260], [90, 280], [105, 270], [115, 275], [125, 262], [135, 272], [145, 250], [165, 245], [170, 258], [180, 252], [190, 262], [200, 285], [212, 298], [222, 290], [232, 302], [245, 298], [260, 308], [272, 320], [285, 308], [298, 310], [308, 282], [316, 318], [328, 328], [340, 300], [350, 290], [358, 305], [365, 280], [372, 285], [382, 262], [398, 256]], 5, 12, 3), c: '#c8cc38' },
      { fill: 'M143 252 155 247 163 242 170 252Z', c: '#f0f020' }
    ]
  },
  momentum: {
    box: [27, 34, 418, 234],
    labels: [[80, '0.0200'], [131, '0.0100'], [113, '0.0124', 1], [172, '0.0000'], [218, '-0.0100'], [259, '-0.0200']],
    layers: [
      h(115, C.white, '3 2'), h(172, '#f4f040'), h(174, '#b8b020'),
      { pts: rough([[27, 180], [38, 160], [50, 205], [60, 130], [78, 70], [85, 90], [95, 105], [105, 145], [112, 150], [120, 170], [130, 130], [138, 145], [150, 95], [162, 60], [170, 90], [175, 65], [185, 100], [190, 125], [197, 120], [207, 200], [217, 150], [225, 225], [237, 225], [243, 165], [250, 215], [262, 240], [275, 210], [287, 235], [297, 200], [308, 140], [318, 215], [330, 240], [340, 205], [350, 220], [358, 135], [368, 105], [375, 120], [385, 95], [395, 70], [401, 112]], 5, 14, 4), c: '#c81424' }
    ]
  },
  full: {
    box: [27, 268, 418, 234],
    labels: [[292, '100.00'], [328, '80.14', 1], [384, '50.00'], [479, '0.00']],
    layers: [
      h(323, '#d81020'), h(441, '#d81818'), h(443, '#901018'), h(328, C.white, '3 1'),
      { pts: rough([[27, 370], [35, 425], [42, 410], [48, 435], [55, 370], [62, 308], [80, 318], [90, 370], [110, 360], [118, 368], [128, 340], [137, 355], [145, 310], [155, 305], [160, 312], [168, 300], [178, 325], [187, 318], [197, 345], [205, 420], [212, 430], [220, 395], [232, 453], [247, 380], [258, 440], [275, 453], [290, 445], [300, 390], [310, 330], [320, 410], [330, 452], [340, 430], [350, 380], [360, 310], [368, 298], [376, 318], [388, 302], [400, 325]], 6, 6, 8), c: '#d4d848' }
    ]
  },
  macd: {
    box: [27, 97, 418, 233],
    labels: [[168, '0.0047', 1], [240, '0.0000'], [316, '-0.0050']],
    layers: [
      { fill: 'M27 242V255L50 258 60 225 75 218 85 235 90 242 140 240 145 222 165 222 175 235 200 245 205 258 218 262 232 270 250 250 265 258 285 250 308 225 330 245 350 218 370 215 385 205 400 210V242Z', c: '#70757e' },
      h(169, C.white, '3 2'), h(241, '#d8d828'), h(244, '#b0b010'),
      { pts: [[27, 175], [50, 210], [80, 175], [140, 172], [170, 130], [190, 130], [205, 145], [240, 215], [265, 255], [290, 278], [315, 265], [340, 292], [365, 260], [385, 230], [402, 188]], c: '#b0b4bc' },
      { pts: [[27, 190], [50, 225], [65, 180], [80, 155], [90, 170], [135, 175], [160, 130], [170, 122], [185, 130], [205, 150], [230, 230], [262, 270], [285, 288], [297, 275], [312, 250], [335, 305], [350, 280], [380, 215], [396, 165]], c: '#c81424' }
    ]
  }
};

function drawCandles(list) {
  return list.map(([x, hi, top, bottom, lo, dir]) =>
    `<path d="M${+x + .5} ${hi}V${lo}" stroke="#84868e"/>` +
    `<rect x="${x - .5}" y="${top}" width="2" height="${bottom - top}" fill="${dir === 'b' ? '#3c40c8' : '#c84030'}" stroke="${dir === 'b' ? '#7078d0' : '#a87870'}" stroke-width=".4"/>`).join('');
}
function drawLayer(l) {
  if (l.candles) return drawCandles(l.candles);
  if (l.fill) return `<path class="solid" d="${l.fill}" style="fill:${l.c}"/>`;
  return `<path d="${l.d || path(l.pts)}" stroke="${l.c}"${l.dash ? ` stroke-dasharray="${l.dash}"` : ''}/>`;
}

for (const [id, chart] of Object.entries(charts)) {
  const plot = document.getElementById(id);
  const [, y0, , height] = chart.box;
  plot.insertAdjacentHTML('afterbegin', `<svg viewBox="${chart.box.join(' ')}" preserveAspectRatio="none" aria-hidden="true">${chart.layers.map(drawLayer).join('')}</svg>`);
  plot.nextElementSibling.innerHTML = chart.labels.map(([y, t, now]) => `<span${now ? ' class="now"' : ''} style="top:${((y - y0) / height * 100).toFixed(1)}%">${t}</span>`).join('');
  const dates = document.querySelector(`[data-chart="${id}"]`);
  if (dates) dates.innerHTML = chart.dates.map(([x, t]) => `<span style="left:${x.toFixed(1)}%">${t}</span>`).join('');
}
```
